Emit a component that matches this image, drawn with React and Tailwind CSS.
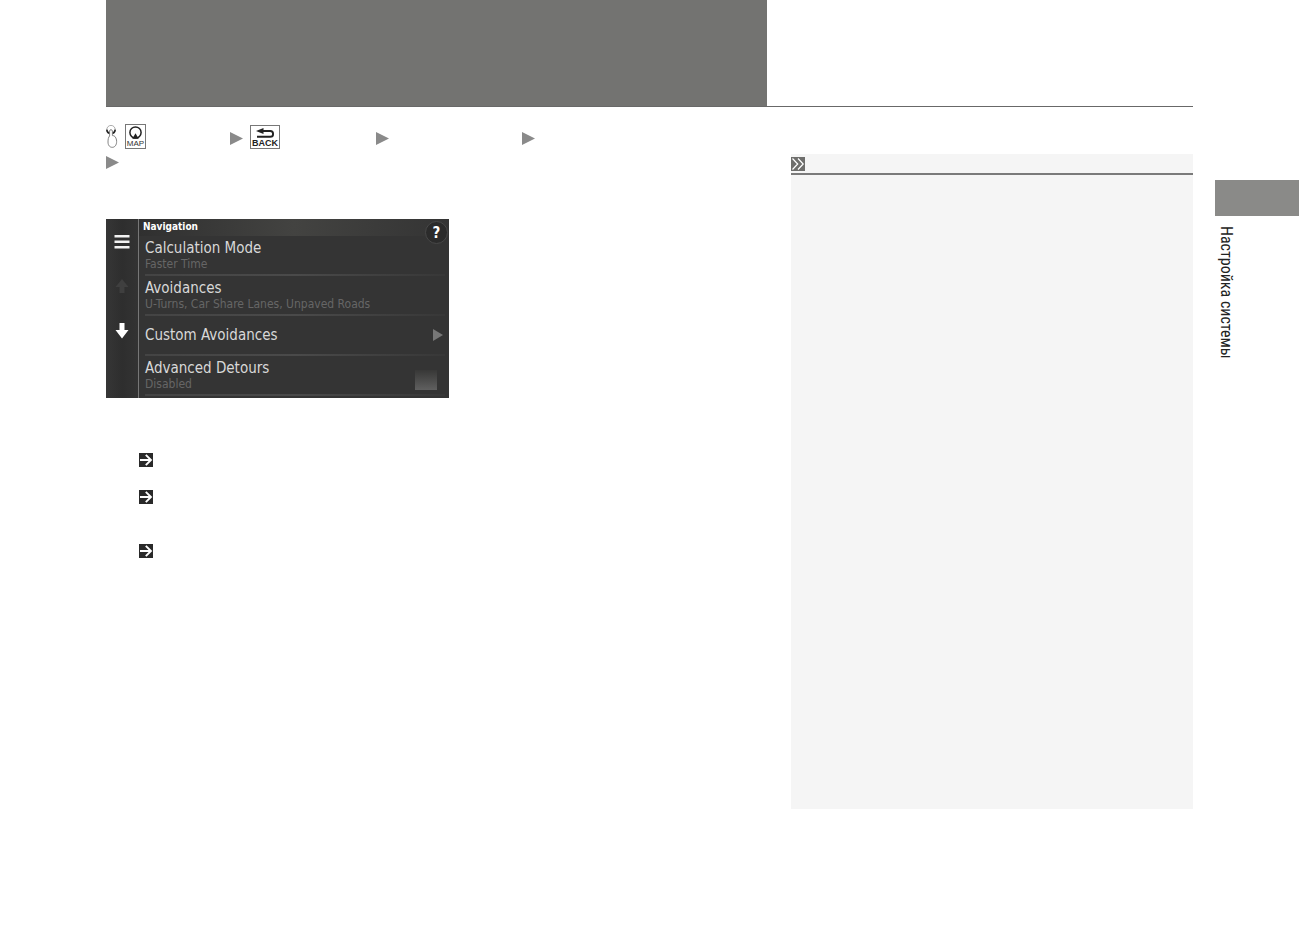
const settings = [
	{ title: "Calculation Mode", value: "Faster Time" },
	{ title: "Avoidances", value: "U-Turns, Car Share Lanes, Unpaved Roads" },
	{ title: "Custom Avoidances", submenu: true },
	{ title: "Advanced Detours", value: "Disabled", toggle: true },
];

const StepArrow = () => (
	<svg viewBox="0 0 13 13" className="w-[13px] h-[13px] shrink-0" fill="#8a8a8a" aria-hidden="true">
		<path d="M0 0 13 6.5 0 13z" />
	</svg>
);

const HandIcon = () => (
	<svg viewBox="0 0 12 24" className="w-3 h-6 shrink-0" fill="none" stroke="#777" aria-hidden="true">
		<circle cx="5" cy="4.6" r="4.2" stroke="#999" strokeWidth="0.8" />
		<path d="M.8 4.6C1 7 2.8 8.4 5 8.4S9 7 9.2 4.6" stroke="#222" strokeWidth="1.6" />
		<path
			d="M3.6 11V6c0-1.8 2.7-1.8 2.8 0v4.6c2.3-.2 3.5 1.6 4.1 4.4.6 3.6-.9 7-3.7 7.3-2.9.3-4.8-1.8-4.8-5.3 0-2.7.4-4.9 1.6-6z"
			fill="#fff"
			strokeWidth="0.9"
		/>
	</svg>
);

// 「MAP」キー
const MapKey = () => (
	<button type="button" className="flex flex-col items-center w-[21px] h-[25px] border border-[#777] bg-white">
		<svg viewBox="0 0 15 15" className="w-[15px] h-[15px]" aria-hidden="true">
			<circle cx="7.5" cy="7.5" r="5.6" fill="none" stroke="#222" strokeWidth="1.5" />
			<path d="m7.5 8.2 3.2 5.6H4.3z" fill="#222" />
		</svg>
		<span className="text-[8px] leading-[8px] text-[#333]">MAP</span>
	</button>
);

// 「BACK」キー
const BackKey = () => (
	<button type="button" className="flex flex-col items-center w-[30px] h-[24px] pt-[2px] border border-[#777] bg-white">
		<svg viewBox="0 0 20 11" className="w-5 h-[11px]" aria-hidden="true">
			<path d="M6 3h9.2a2.9 2.9 0 0 1 0 5.8H2" fill="none" stroke="#222" strokeWidth="1.9" />
			<path d="M1 3 8.5 0v6z" fill="#222" />
		</svg>
		<span className="text-[9px] leading-[9px] font-bold text-[#222]">BACK</span>
	</button>
);

const LinkArrow = () => (
	<svg viewBox="0 0 14 14" className="w-[14px] h-[14px]" aria-hidden="true">
		<path fill="#292929" d="M0 0h14v14H0z" />
		<path d="M1 7h11M6.8 1.8 12 7l-5.2 5.2" fill="none" stroke="#fff" strokeWidth="1.9" />
	</svg>
);

const Breadcrumb = () => (
	<nav className="flex flex-col">
		<div className="flex items-center h-[27px]">
			<div className="flex items-center gap-[7px] w-[124px]">
				<HandIcon />
				<MapKey />
			</div>
			<div className="flex items-center gap-[7px] w-[146px]">
				<span className="pt-[3px]"><StepArrow /></span>
				<BackKey />
			</div>
			<div className="w-[146px] pt-[3px]">
				<StepArrow />
			</div>
			<div className="pt-[3px]">
				<StepArrow />
			</div>
		</div>
		<div className="flex items-center h-6">
			<StepArrow />
		</div>
	</nav>
);

const SettingRow = ({ title, value, submenu, toggle }) => (
	<li className="flex flex-col h-10">
		<div className="flex flex-1 items-center justify-between px-[6px]">
			<div className="flex flex-col">
				<label htmlFor={toggle ? "detours" : undefined} className="text-[15px] leading-[18px] text-[#d8d8d8] whitespace-nowrap">
					{title}
				</label>
				{value && <span className="text-[12px] leading-[15px] text-[#666] whitespace-nowrap">{value}</span>}
			</div>
			{submenu && (
				<svg viewBox="0 0 10 12" className="w-[10px] h-3" fill="#777" aria-hidden="true">
					<path d="M0 0 10 6 0 12z" />
				</svg>
			)}
			{toggle && (
				<input
					id="detours"
					type="checkbox"
					className="appearance-none self-end w-[22px] h-5 mr-[6px] mb-1 bg-linear-to-b from-[#383837] to-[#606060]"
				/>
			)}
		</div>
		<div className="h-[2px] ml-[6px] mr-1 bg-linear-to-r from-[#444] via-[#4a4a4a] to-[#383838]" />
	</li>
);

const NavigationScreen = () => (
	<section className="flex w-[343px] h-[179px] bg-[#343434] font-['DejaVu_Sans_Condensed','DejaVu_Sans',sans-serif] [font-stretch:condensed]">
		<div className="flex flex-col items-center w-8 pt-4 bg-linear-to-r from-[#363636] via-[#2e2e2e] to-[#333]">
			<button type="button" aria-label="Menu">
				<svg viewBox="0 0 16 14" className="w-4 h-[14px]" fill="#f2f2f2">
					<path d="M.5 0h15v2.4H.5zM.5 5.5h15v2.4H.5zM.5 11h15v2.4H.5z" />
				</svg>
			</button>
			<button type="button" aria-label="Up" className="mt-[30px]">
				<svg viewBox="0 0 14 16" className="w-[14px] h-4" fill="#3f3f3f">
					<path d="M7 0 13.5 8H9.5v6h-5V8h-4z" />
				</svg>
			</button>
			<button type="button" aria-label="Down" className="mt-7">
				<svg viewBox="0 0 14 16" className="w-[14px] h-4" fill="#fff">
					<path d="M4.5 0h5v7h4L7 15.5.5 7h4z" />
				</svg>
			</button>
		</div>
		<div className="w-px bg-[#777]" />
		<div className="relative flex-1">
			<h2 className="h-[17px] pl-1 text-[10px] leading-[15px] font-bold text-white bg-linear-to-r from-[#303030] via-[#434341] to-[#343434]">
				Navigation
			</h2>
			<ul>
				{settings.map((item) => (
					<SettingRow key={item.title} {...item} />
				))}
			</ul>
			<button
				type="button"
				aria-label="Help"
				className="absolute top-[2px] right-[1px] w-[23px] h-[23px] rounded-full border border-[#484848] bg-[#2b2b2b] text-[15px] leading-[20px] font-bold text-white"
			>
				?
			</button>
		</div>
	</section>
);

const App = () => {
	return (
		<div className="flex min-h-screen bg-white font-['Liberation_Sans',sans-serif]">
			<div className="flex-1 pl-[106px]">
				<header className="flex h-[107px] border-b border-[#686868]">
					<div className="w-[661px] bg-[#737371]" />
				</header>
				<div className="flex gap-6">
					<main className="w-[661px] pt-4">
						<Breadcrumb />
						<div className="mt-[45px]">
							<NavigationScreen />
						</div>
						<ul className="flex flex-col pl-[33px] pt-[55px]">
							<li className="h-[37px]"><LinkArrow /></li>
							<li className="h-[54px]"><LinkArrow /></li>
							<li><LinkArrow /></li>
						</ul>
					</main>
					<aside className="flex-1 min-h-[655px] mt-[47px] bg-[#f5f5f5]">
						<div className="h-[21px] pt-[3px] border-b-2 border-[#7a7a7a]">
							<svg viewBox="0 0 14 14" className="w-[14px] h-[14px]" aria-hidden="true">
								<path fill="#6e6e6c" d="M0 0h14v14H0z" />
								<path d="m1.5 1.5 5.2 5.5-5.2 5.5M7 1.5l5.2 5.5L7 12.5" fill="none" stroke="#fff" strokeWidth="1.2" />
							</svg>
						</div>
					</aside>
				</div>
			</div>
			<div className="w-[84px] ml-[22px] pt-[180px]">
				<div className="h-9 bg-[#8a8a88]" />
				<p className="mt-[10px] text-[16px] leading-[22px] text-[#222] font-['Liberation_Sans_Narrow','Roboto_Condensed','Liberation_Sans',sans-serif] [writing-mode:vertical-rl]">
					Настройка системы
				</p>
			</div>
		</div>
	);
};

export default App;
